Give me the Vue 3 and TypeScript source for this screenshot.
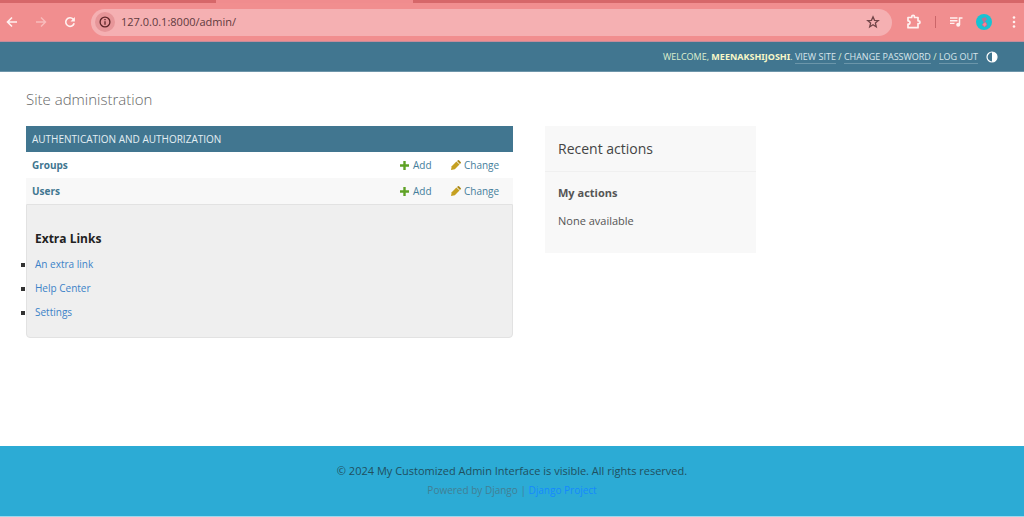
<script setup lang="ts">
interface AdminModel {
  name: string
  slug: string
}

const models: AdminModel[] = [
  { name: 'Groups', slug: 'group' },
  { name: 'Users', slug: 'user' },
]

const extraLinks: string[] = ['An extra link', 'Help Center', 'Settings']
</script>

<template>
  <div class="window">
    <div class="tabstrip"><span class="active-tab"></span></div>
    <nav class="toolbar" aria-label="Browser">
      <button class="tool" aria-label="Back">
        <svg width="12" height="12" viewBox="0 0 12 12"><path d="M11 6H2M6 1.5 1.5 6 6 10.5" fill="none" stroke="#fff1f0" stroke-width="1.6" /></svg>
      </button>
      <button class="tool" aria-label="Forward">
        <svg width="12" height="12" viewBox="0 0 12 12"><path d="M1 6h9M6 1.5 10.5 6 6 10.5" fill="none" stroke="#f8bcbc" stroke-width="1.4" /></svg>
      </button>
      <button class="tool" aria-label="Reload">
        <svg width="12" height="12" viewBox="0 0 12 12"><path d="M10.2 7.2A4.3 4.3 0 1 1 9.2 3.1L10 4" fill="none" stroke="#fff1f0" stroke-width="1.6" /><path d="M10.9 1v4.400H6.500z" fill="#fff1f0" /></svg>
      </button>
      <div class="address">
        <button class="site-info" aria-label="Site information">
          <svg width="12" height="12" viewBox="0 0 12 12"><circle cx="6" cy="6" r="4.9" fill="none" stroke="#5c2427" stroke-width="1.3" /><path d="M6 5.3v3.4M6 3v1.3" stroke="#5c2427" stroke-width="1.3" /></svg>
        </button>
        <input class="url" type="text" value="127.0.0.1:8000/admin/" aria-label="Address" />
        <button class="tool" aria-label="Bookmark">
          <svg width="14" height="14" viewBox="0 0 14 14"><path d="m7 1.800 1.500 3.500 3.800.3-2.900 2.500.9 3.700L7 9.800l-3.300 2 .9-3.700-2.900-2.500 3.800-.3z" fill="none" stroke="#714548" stroke-width="1.3" /></svg>
        </button>
      </div>
      <div class="tools">
        <button class="tool" aria-label="Extensions">
          <svg width="16" height="16" viewBox="0 0 16 16"><path d="M2 3.500h3.700v-.7a1.400 1.400 0 0 1 2.800 0v.7H12v3.300h.6a1.400 1.400 0 0 1 0 2.800H12v4.100H2v-3.500c1.200 0 2-.7 2-1.700s-.8-1.700-2-1.700z" fill="none" stroke="#fff1f0" stroke-width="1.7" stroke-linejoin="round" /></svg>
        </button>
        <span class="divider"></span>
        <button class="tool" aria-label="Media controls">
          <svg width="14" height="14" viewBox="0 0 14 14"><path d="M1 3h7.500M1 5.700h7.500M1 8.400h4.500" stroke="#fff1f0" stroke-width="1.4" /><path d="M10.500 9.500V3H13.500" fill="none" stroke="#fff1f0" stroke-width="1.5" /><circle cx="9.200" cy="9.700" r="2" fill="#fff1f0" /></svg>
        </button>
        <button class="tool" aria-label="Profile">
          <svg width="16" height="16" viewBox="0 0 16 16"><circle cx="8" cy="8" r="8" fill="#16c3d3" /><path d="M5.500 4.500 9.500 3l1.500 2.200-2 2.300 2.100 1.800c.8 2.500-1 4-3 3.700L5.500 11l2-2.200z" fill="#a77a9b" /><path d="m6.500 10.300 2.800-2 1.300 2.500-2.300 1.900z" fill="#ff7f94" /></svg>
        </button>
        <button class="tool menu" aria-label="Menu">
          <svg width="4" height="14" viewBox="0 0 4 14"><g fill="#fff1f0"><circle cx="2" cy="2.500" r="1.300" /><circle cx="2" cy="7" r="1.300" /><circle cx="2" cy="11.500" r="1.300" /></g></svg>
        </button>
      </div>
    </nav>

    <header class="header">
      <div class="user-tools">
        Welcome, <strong>Meenakshijoshi</strong>.
        <a href="#site">View site</a> / <a href="#password">Change password</a> / <a href="#logout">Log out</a>
      </div>
      <button class="tool" aria-label="Toggle theme">
        <svg width="12" height="12" viewBox="0 0 12 12"><circle cx="6" cy="6" r="5" fill="none" stroke="#fff" stroke-width="1.2" /><path d="M6 1a5 5 0 0 1 0 10z" fill="#fff" /></svg>
      </button>
    </header>

    <main class="content">
      <h1>Site administration</h1>
      <div class="columns">
        <section class="apps">
          <table>
            <caption>Authentication and Authorization</caption>
            <tbody>
              <tr v-for="model in models" :key="model.slug">
                <th scope="row"><a :href="'#' + model.slug">{{ model.name }}</a></th>
                <td class="add">
                  <a :href="'#' + model.slug + '-add'">
                    <svg width="9" height="9" viewBox="0 0 9 9"><path d="M4.500 0v9M0 4.500h9" stroke="#5fa225" stroke-width="2.4" /></svg>Add
                  </a>
                </td>
                <td class="change">
                  <a :href="'#' + model.slug + '-change'">
                    <svg width="10" height="10" viewBox="0 0 10 10"><path d="M0 10 .7 6.200 5.400 1.500l3.100 3.100L3.800 9.300z" fill="#c5a021" /><path d="m6 1 1-.8q.5-.4 1 .1L9.700 2q.5.500.1 1L9 4z" fill="#a98718" /></svg>Change
                  </a>
                </td>
              </tr>
            </tbody>
          </table>
          <div class="extra">
            <h2>Extra Links</h2>
            <ul>
              <li v-for="link in extraLinks" :key="link"><a href="#extra">{{ link }}</a></li>
            </ul>
          </div>
        </section>
        <aside class="recent">
          <h2>Recent actions</h2>
          <div class="recent-body">
            <h3>My actions</h3>
            <p>None available</p>
          </div>
        </aside>
      </div>
    </main>

    <footer class="footer">
      <p>© 2024 My Customized Admin Interface is visible. All rights reserved.</p>
      <p class="powered">Powered by Django | <a href="#django">Django Project</a></p>
    </footer>
  </div>
</template>

<style>
body {
  margin: 0;
  background: #fff;
}
</style>

<style scoped>
* {
  box-sizing: border-box;
}
.window {
  display: flex;
  flex-direction: column;
  min-height: 100vh;
  font-family: "Open Sans", "Noto Sans", sans-serif;
  font-size: 11px;
  line-height: 16px;
  color: #333;
}
h1, h2, h3, p, ul {
  margin: 0;
  padding: 0;
}
a {
  color: #447e9b;
  text-decoration: none;
}
button {
  border: 0;
  padding: 0;
  background: none;
}
svg {
  display: block;
}
.tool {
  display: flex;
  flex: none;
}
.tabstrip {
  height: 3px;
  background: #d66769;
}
.active-tab {
  display: block;
  width: 197px;
  height: 3px;
  margin-left: 216px;
  background: #f08c8e;
}
.toolbar {
  display: flex;
  align-items: center;
  gap: 17px;
  height: 39px;
  padding: 0 8px 0 6px;
  background: #f18e8f;
  border-bottom: 1px solid #c58b9b;
}
.address {
  display: flex;
  flex: 1;
  align-items: center;
  height: 27px;
  margin-left: -2px;
  padding: 0 12px 0 4px;
  border-radius: 14px;
  background: #f5b0b2;
}
.site-info {
  display: grid;
  place-items: center;
  width: 20px;
  height: 20px;
  border-radius: 50%;
  background: #e79699;
}
.url {
  flex: 1;
  min-width: 0;
  margin-left: 6px;
  padding: 0;
  border: 0;
  outline: 0;
  background: none;
  color: #5f3a3d;
  font: 11px/16px "Open Sans", "Noto Sans", sans-serif;
}
.tools {
  display: flex;
  align-items: center;
  gap: 13px;
  margin-left: -3px;
}
.divider {
  width: 1px;
  height: 12px;
  background: #cb6669;
}
.menu {
  margin-left: 7px;
}
.header {
  display: flex;
  align-items: center;
  justify-content: flex-end;
  gap: 8px;
  height: 30px;
  padding: 0 26px;
  border-bottom: 1px solid #6d95aa;
  background: #417690;
  color: #dff0cf;
  font-size: 9px;
  text-transform: uppercase;
}
.header strong {
  color: #f8f8c8;
  font-family: "Noto Sans", sans-serif;
}
.user-tools a {
  border-bottom: 1px solid #6b96aa;
  color: #d9e6ec;
}
.content {
  flex: 1;
  padding: 17px 26px 0;
}
h1 {
  color: #666;
  font-size: 15px;
  font-weight: 300;
  line-height: 20px;
}
.columns {
  display: grid;
  grid-template-columns: minmax(0, 487px) 211px;
  align-items: start;
  gap: 32px;
  margin-top: 17px;
}
table {
  width: 100%;
  border-collapse: collapse;
  font-size: 10px;
}
caption {
  padding: 5px 6px;
  background: #417690;
  color: #e4eff4;
  text-align: left;
  text-transform: uppercase;
}
tr {
  height: 26px;
}
tr:nth-child(2) {
  background: #f8f8f8;
}
th, td {
  padding: 0 6px;
  text-align: left;
}
th a {
  color: #417690;
  font-weight: 700;
}
.add {
  width: 51px;
}
.change {
  width: 68px;
}
td a {
  display: flex;
  align-items: center;
  gap: 4px;
}
.change a {
  gap: 3px;
}
.extra {
  padding: 26px 8px 13px;
  border: 1px solid #e2e2e2;
  border-radius: 0 0 4px 4px;
  background: #efefef;
}
.extra h2 {
  margin-bottom: 5px;
  color: #222;
  font-size: 12px;
  font-weight: 700;
}
.extra ul {
  list-style: square;
  font-size: 10px;
}
.extra li {
  line-height: 24px;
}
.extra li a {
  color: #3b82c8;
}
.recent {
  min-height: 127px;
  background: #f8f8f8;
}
.recent h2 {
  padding: 13px 13px 12px;
  border-bottom: 1px solid #f0f0f0;
  color: #444;
  font-size: 14px;
  font-weight: 400;
  line-height: 20px;
}
.recent-body {
  padding: 13px;
  color: #555;
}
.recent h3 {
  margin-bottom: 12px;
  color: #555;
  font-size: 11px;
  font-weight: 700;
}
.footer {
  height: 71px;
  padding-top: 17px;
  border-bottom: 1px solid #a0d8ec;
  background: #2cabd5;
  color: #20505f;
  text-align: center;
}
.powered {
  margin-top: 3px;
  color: #427f94;
  font-size: 10px;
}
.powered a {
  color: #1589ff;
}
</style>
